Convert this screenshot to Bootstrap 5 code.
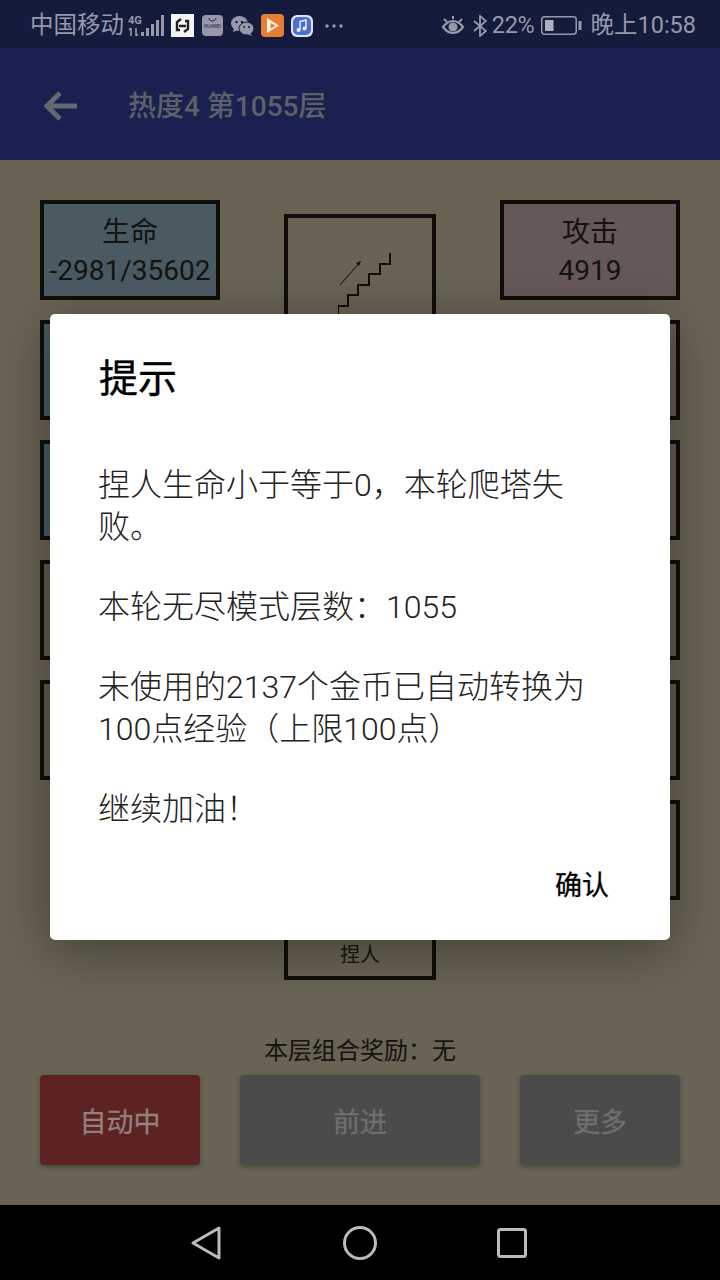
<!DOCTYPE html>
<html lang="zh-CN">
<head>
    <meta charset="UTF-8">
    <meta name="viewport" content="width=device-width, initial-scale=1.0">
    <title>提示</title>
    <link href="https://cdn.jsdelivr.net/npm/bootstrap@5.3.0/dist/css/bootstrap.min.css" rel="stylesheet">
    <style>
        body { margin: 0; background: #000; font-family: Roboto, "Noto Sans CJK SC", sans-serif; }
        .phone { width: 720px; height: 1280px; overflow: hidden; }
        .status-strip { height: 48px; background: #141b3d; color: #9799ab; font-size: 23.5px; line-height: 1; padding: 3px 24px 0 30px; }
        .status-strip svg { display: block; flex: none; }
        .carrier { width: 98px; }
        .gap-6 { margin-right: 6px; }
        .gap-7 { margin-right: 7px; }
        .gap-8 { margin-right: 8px; }
        .pct { margin: 0 7px 0 5px; letter-spacing: -.3px; }
        .app-strip { height: 112px; background: #1a2150; padding: 4px 0 0 44px; }
        .app-title { margin: 2px 0 0 50px; font-size: 28px; font-weight: 500; color: #5e6069; }
        .stage { height: 1045px; background: #686353; padding: 40px; }
        .stat-col { width: 180px; gap: 20px; }
        .stat-box { width: 180px; height: 100px; border: 4px solid #100e0b; color: #14130f; font-size: 28px; line-height: 38px; padding-top: 10px; text-align: center; white-space: nowrap; background: #5e5a4c; }
        .stat-hp { background: #4a5a63; }
        .stat-atk { background: #665758; }
        .tower-box { width: 152px; height: 766px; margin-top: 14px; border: 4px solid #100e0b; color: #14130f; font-size: 20px; padding-bottom: 6px; }
        .tower-box svg { margin: 35px auto 0 50px; }
        .bonus-line { height: 28px; margin-top: 57px; font-size: 24px; line-height: 28px; color: #14130f; text-align: center; }
        .btn-row { margin-top: 10px; gap: 40px; }
        .game-btn { height: 90px; padding-top: 12px; font-size: 27px; border: 0; border-radius: 4px; box-shadow: 0 2px 5px rgba(0,0,0,.3); }
        .game-btn:disabled { opacity: 1; color: #6f6f6f; background: #4b4b4b; -webkit-text-stroke: .3px; }
        .game-btn.btn-auto:disabled { width: 160px; background: #5c2321; color: #94807d; }
        .btn-go { width: 240px; }
        .btn-more { width: 160px; }
        .nav-strip { height: 75px; background: #000; }
        .tip-box { position: absolute; left: 50px; top: 314px; width: 620px; height: 626px; border: 0; border-radius: 5px; background: #fff; box-shadow: 0 10px 50px rgba(0,0,0,.35); padding: 0; }
        .tip-title { margin: 0; padding: 41px 49px 0; font-size: 39px; line-height: 48px; font-weight: 400; color: #000; -webkit-text-stroke: .4px; }
        .tip-body { padding: 61px 49px 0; margin-left: -1px; width: 590px; font-size: 32px; line-height: 42px; font-weight: 300; color: #222; }
        .tip-body p { margin: 0 0 38px; }
        .tip-ok { position: absolute; right: 61px; bottom: 36px; font-size: 27px; line-height: 36px; font-weight: 400; color: #000; -webkit-text-stroke: .3px; }
    </style>
</head>
<body>
    <div class="phone position-relative d-flex flex-column">

        <div class="status-strip d-flex align-items-center">
            <span class="carrier text-nowrap">中国移动</span>
            <svg width="37" height="24" viewBox="0 0 37 24" class="gap-6">
                <text x="0" y="10" font-family="Roboto" font-size="11" font-weight="700" fill="#9799ab">4G</text>
                <path d="M3 14v8M1 16l2-2M8 14v8M8 22l2-2" stroke="#9799ab" stroke-width="1.6" fill="none"/>
                <rect x="13" y="18" width="3" height="4" fill="#9799ab"/>
                <rect x="18" y="14" width="3" height="8" fill="#9799ab"/>
                <rect x="23" y="10" width="3" height="12" fill="#9799ab"/>
                <rect x="28" y="6" width="3" height="16" fill="#9799ab"/>
                <rect x="33" y="1" width="3" height="21" fill="#9799ab"/>
            </svg>
            <svg width="23" height="23" viewBox="0 0 23 23" class="gap-8">
                <rect width="23" height="23" fill="#f3f4f6"/>
                <path d="M10 5l-4 3v8h3M13 18l4-3V7h-3M8 12h7" stroke="#222" stroke-width="2.4" fill="none"/>
            </svg>
            <svg width="21" height="21" viewBox="0 0 21 21" class="gap-8">
                <rect width="21" height="21" rx="4" fill="#9799ab"/>
                <path d="M7 3c0 4 7 4 7 0" stroke="#141b3d" stroke-width="1" fill="none"/>
                <text x="10.5" y="13" font-family="Roboto" font-size="4.6" text-anchor="middle" fill="#141b3d">HUAWEI</text>
            </svg>
            <svg width="23" height="20" viewBox="0 0 23 20" class="gap-7">
                <ellipse cx="8.5" cy="7.5" rx="8.5" ry="7.5" fill="#9799ab"/>
                <path d="M3 12l-1 4 5-2z" fill="#9799ab"/>
                <ellipse cx="15.5" cy="12.5" rx="7.5" ry="6.4" fill="#9799ab" stroke="#141b3d" stroke-width="1"/>
                <path d="M19 17l2 3-5-2z" fill="#9799ab"/>
                <circle cx="5.5" cy="6" r="1.2" fill="#141b3d"/><circle cx="11" cy="6" r="1.2" fill="#141b3d"/>
                <circle cx="13" cy="11" r="1" fill="#141b3d"/><circle cx="18" cy="11" r="1" fill="#141b3d"/>
            </svg>
            <svg width="23" height="23" viewBox="0 0 23 23" class="gap-7">
                <rect width="23" height="23" rx="4" fill="#e67e33"/>
                <path d="M6 4l12 7.5L6 19z" fill="#fdf1e4"/>
                <path d="M9.5 9l5 2.7-5 2.7z" fill="#e67e33"/>
            </svg>
            <svg width="22" height="22" viewBox="0 0 22 22" class="me-2">
                <rect width="22" height="22" rx="6" fill="#dfe6f8"/>
                <rect x="2" y="2" width="18" height="18" rx="5" fill="#4d6fd0"/>
                <path d="M9 15V6.500l6-1.500v8" stroke="#e8edfb" stroke-width="1.500" fill="none"/>
                <circle cx="7.500" cy="15" r="2" fill="#e8edfb"/><circle cx="13.500" cy="13.500" r="2" fill="#e8edfb"/>
            </svg>
            <svg width="18" height="4" viewBox="0 0 18 4" class="ms-1">
                <circle cx="2" cy="2" r="1.700" fill="#9799ab"/><circle cx="9" cy="2" r="1.700" fill="#9799ab"/><circle cx="16" cy="2" r="1.700" fill="#9799ab"/>
            </svg>

            <svg width="24" height="20" viewBox="0 0 24 20" class="ms-auto me-2">
                <path d="M2 11c3-4 6-6 10-6s7 2 10 6c-3 4-6 6-10 6s-7-2-10-6z" stroke="#9799ab" stroke-width="2.200" fill="none"/>
                <circle cx="12" cy="11" r="4.500" fill="#9799ab"/>
                <path d="M3 3l3 3M12 0v3M21 3l-3 3" stroke="#9799ab" stroke-width="2"/>
            </svg>
            <svg width="14" height="22" viewBox="0 0 14 22">
                <path d="M1 6l12 10-6 5V1l6 5L1 16" stroke="#9799ab" stroke-width="1.800" fill="none"/>
            </svg>
            <span class="pct">22%</span>
            <svg width="41" height="19" viewBox="0 0 41 19" class="gap-8">
                <rect x=".75" y=".75" width="34.500" height="17.500" rx="3" stroke="#9799ab" stroke-width="1.500" fill="none"/>
                <rect x="4" y="4" width="8.500" height="11" fill="#aeb0c0"/>
                <rect x="37.500" y="5" width="3" height="9" fill="#9799ab"/>
            </svg>
            <span class="text-nowrap">晚上10:58</span>
        </div>

        <div class="app-strip d-flex align-items-center">
            <svg width="34" height="30" viewBox="0 0 34 30">
                <path d="M33 15H4M16 2L3 15l13 13" stroke="#66676f" stroke-width="5" fill="none"/>
            </svg>
            <h1 class="app-title">热度4 第1055层</h1>
        </div>

        <div class="stage">
            <div class="d-flex justify-content-between">
                <div class="stat-col d-flex flex-column">
                    <div class="stat-box stat-hp">生命<br>-2981/35602</div>
                    <div class="stat-box stat-hp"></div>
                    <div class="stat-box stat-hp"></div>
                    <div class="stat-box"></div>
                    <div class="stat-box"></div>
                </div>
                <div class="tower-box d-flex flex-column align-items-center justify-content-between">
                    <svg class="align-self-start" width="56" height="64" viewBox="0 0 56 64">
                        <path d="M52 0v11H42v10H31v11H20v10H10v11H0v11" stroke="#100e0b" stroke-width="2" fill="none"/>
                        <path d="M2 32L22 9" stroke="#100e0b" stroke-width="1"/>
                        <path d="M23 8l-5 2 3 3z" fill="#100e0b"/>
                    </svg>
                    <span>捏人</span>
                </div>
                <div class="stat-col d-flex flex-column">
                    <div class="stat-box stat-atk">攻击<br>4919</div>
                    <div class="stat-box stat-atk"></div>
                    <div class="stat-box stat-atk"></div>
                    <div class="stat-box"></div>
                    <div class="stat-box"></div>
                    <div class="stat-box"></div>
                </div>
            </div>
            <div class="bonus-line">本层组合奖励：无</div>
            <div class="btn-row d-flex">
                <button class="btn game-btn btn-auto" disabled>自动中</button>
                <button class="btn game-btn btn-go" disabled>前进</button>
                <button class="btn game-btn btn-more" disabled>更多</button>
            </div>
        </div>

        <div class="nav-strip d-flex align-items-center justify-content-center">
            <svg width="340" height="34" viewBox="0 0 340 34">
                <path d="M29 2L3 17l26 15z" stroke="#bbb" stroke-width="3" fill="none" stroke-linejoin="round"/>
                <circle cx="170" cy="17" r="15.500" stroke="#bbb" stroke-width="3" fill="none"/>
                <rect x="308.500" y="3.500" width="27" height="27" rx="2" stroke="#bbb" stroke-width="3" fill="none"/>
            </svg>
        </div>

        <div class="modal-content tip-box">
            <h2 class="tip-title">提示</h2>
            <div class="tip-body">
                <p>捏人生命小于等于0，本轮爬塔失败。</p>
                <p>本轮无尽模式层数：1055</p>
                <p>未使用的2137个金币已自动转换为100点经验（上限100点）</p>
                <p>继续加油！</p>
            </div>
            <span class="tip-ok">确认</span>
        </div>
    </div>
</body>
</html>
